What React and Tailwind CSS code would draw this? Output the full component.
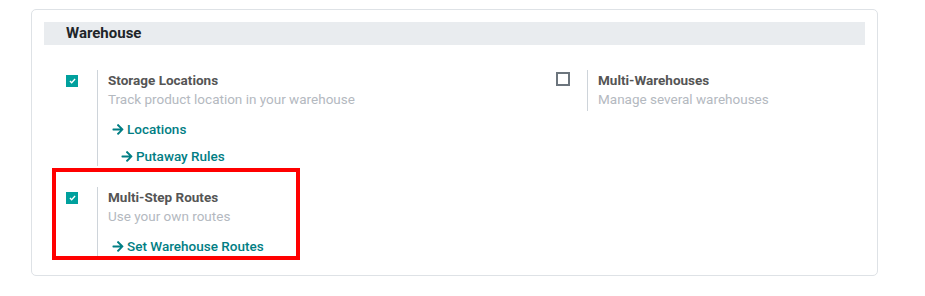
import React from "react";

function Arrow() {
  return (
    <svg width="12" height="11" viewBox="0 0 448 448" className="shrink-0" fill="currentColor">
      <path d="M190.5 32.5l22.2-22.2c9.4-9.4 24.6-9.4 33.9 0l194.4 194.3c9.4 9.4 9.4 24.6 0 33.9L246.6 433c-9.4 9.4-24.6 9.4-33.9 0l-22.2-22.2c-9.5-9.5-9.3-25 .4-34.3L311.4 261H24c-13.3 0-24-10.7-24-24v-32c0-13.3 10.7-24 24-24h287.4L190.9 66.8c-9.8-9.3-10-24.8-.4-34.3z" />
    </svg>
  );
}

function Checkbox({ checked }) {
  if (checked) {
    return (
      <div className="w-[12px] h-[12px] bg-[#00a09d] flex items-center justify-center">
        <svg width="7" height="6" viewBox="0 0 8 7">
          <path d="M1 3.6 L3 5.5 L7 1.2" stroke="white" strokeWidth="1.6" fill="none" />
        </svg>
      </div>
    );
  }
  return <div className="w-[14px] h-[14px] border-2 border-[#6c757d] bg-white" />;
}

function LinkRow({ label, indent }) {
  return (
    <div className={`flex items-center gap-[3px] h-[20px] text-[#017e84] font-medium text-[13.5px] ${indent ? "pl-[13px]" : "pl-[4px]"}`}>
      <Arrow />
      <span>{label}</span>
    </div>
  );
}

function Setting({ checked, title, desc, children, lineClass }) {
  return (
    <div className="flex">
      <div className="w-[31px] flex justify-start">
        <div className={checked ? "mt-[5px]" : "mt-[2px]"}>
          <Checkbox checked={checked} />
        </div>
      </div>
      <div className={`border-l border-[#ced4da] pl-[10px] pt-[1px] ${lineClass || ""}`}>
        <div className="text-[13.5px] leading-[18px] font-bold text-[#555555]">{title}</div>
        <div className="text-[13.5px] leading-[21px] text-[#b4b9bf]">{desc}</div>
        {children}
      </div>
    </div>
  );
}

export default function App() {
  return (
    <div className="w-[925px] h-[296px] bg-white pt-[9px] pl-[31px]" style={{ fontFamily: "Roboto, 'Liberation Sans', sans-serif" }}>
      <div className="w-[847px] h-[267px] border border-[#dee2e6] rounded-[5px] pt-[12px] px-[12px]">
        <div className="h-[23px] bg-[#e9ecef] pl-[22px] flex items-center">
          <span className="text-[15px] font-bold text-[#212529]">Warehouse</span>
        </div>
        <div className="flex pl-[22px] pt-[25px]">
          <div className="w-[490px]">
            <Setting checked title="Storage Locations" desc="Track product location in your warehouse">
              <div className="mt-[9px]">
                <LinkRow label="Locations" />
              </div>
              <div className="mt-[7px]">
                <LinkRow label="Putaway Rules" indent />
              </div>
            </Setting>
            <div className="mt-[21px] relative">
              <div className="absolute left-[-14px] top-[-19px] w-[248px] h-[92px] border-[4px] border-[#ff0000] pointer-events-none" />
              <Setting checked title="Multi-Step Routes" desc="Use your own routes">
                <div className="mt-[9px] pb-[1px]">
                  <LinkRow label="Set Warehouse Routes" />
                </div>
              </Setting>
            </div>
          </div>
          <div>
            <Setting title="Multi-Warehouses" desc="Manage several warehouses" lineClass="pb-[1px]" />
          </div>
        </div>
      </div>
    </div>
  );
}
